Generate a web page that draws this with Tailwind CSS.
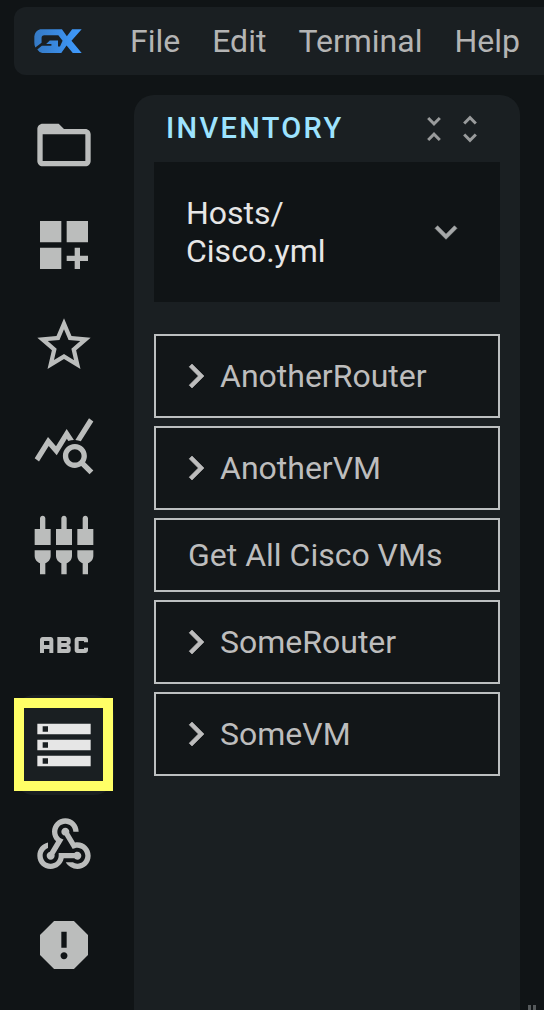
<!DOCTYPE html>
<html lang="en">
<head>
<meta charset="utf-8">
<meta name="viewport" content="width=device-width, initial-scale=1">
<title>Inventory</title>
<script src="https://cdn.jsdelivr.net/npm/@tailwindcss/browser@4"></script>
</head>
<body class="flex h-screen flex-col overflow-hidden bg-[#101416] font-[Roboto,sans-serif] text-[32px] leading-[38px] text-[#b4b4b4]">
  <header class="mt-[7px] ml-3.5 flex h-[68px] shrink-0 items-center rounded-l-xl bg-[#1a1f22] pl-5">
    <a href="#" aria-label="GX home" class="mr-8 block">
      <svg class="h-6 w-12" viewBox="0 0 144 73" aria-hidden="true">
        <defs><linearGradient id="brand" x1="0" x2="1"><stop offset="0" stop-color="#3579c4"/><stop offset="1" stop-color="#3f9bff"/></linearGradient></defs>
        <path fill="url(#brand)" d="M18 1H84L99 22L115 1H144L113 36L144 73H117L98 50L82 73H24Q14 70 9 62L23 51H52V46H36L47 35H72V53H78L86 36L73 19H30Q22 19 22 27V42L3 56Q0 50 0 42V22Q2 6 18 1Z"/>
      </svg>
    </a>
    <nav class="flex" aria-label="Main menu">
      <button type="button" class="px-4">File</button>
      <button type="button" class="px-4">Edit</button>
      <button type="button" class="px-4">Terminal</button>
      <button type="button" class="px-4">Help</button>
    </nav>
  </header>

  <div class="mt-5 flex min-h-0 flex-1">
    <nav class="ml-3.5 flex w-[100px] shrink-0 flex-col text-[#bbbdbc]" aria-label="Tools">
      <button type="button" aria-label="Files" class="flex h-[100px] shrink-0 items-center justify-center">
        <svg class="size-16" viewBox="0 0 24 24" fill="currentColor"><path d="M20 6h-8l-2-2H4c-1.1 0-1.99.9-1.99 2L2 18c0 1.1.9 2 2 2h16c1.1 0 2-.9 2-2V8c0-1.1-.9-2-2-2zm0 12H4V8h16v10z"/></svg>
      </button>
      <button type="button" aria-label="Add widget" class="flex h-[100px] shrink-0 items-center justify-center">
        <svg class="size-16" viewBox="0 0 24 24" fill="currentColor"><path d="M3 3h8v8H3zm10 0h8v8h-8zM3 13h8v8H3zm15 0h-2v3h-3v2h3v3h2v-3h3v-2h-3z"/></svg>
      </button>
      <button type="button" aria-label="Favorites" class="flex h-[100px] shrink-0 items-center justify-center">
        <svg class="size-16" viewBox="0 0 24 24" fill="currentColor"><path d="M22 9.24l-7.19-.62L12 2 9.19 8.63 2 9.24l5.46 4.73L5.82 21 12 17.27 18.18 21l-1.63-7.03L22 9.24zM12 15.4l-3.76 2.27 1-4.28-3.32-2.88 4.38-.38L12 6.1l1.71 4.04 4.38.38-3.32 2.88 1 4.28L12 15.4z"/></svg>
      </button>
      <button type="button" aria-label="Query stats" class="flex h-[100px] shrink-0 items-center justify-center">
        <svg class="size-16" viewBox="0 0 24 24" fill="currentColor"><path d="M19.88 18.47c.44-.7.7-1.51.7-2.39 0-2.49-2.01-4.5-4.5-4.5s-4.5 2.01-4.5 4.5 2.01 4.5 4.49 4.5c.88 0 1.7-.26 2.39-.7L21.58 23 23 21.58l-3.12-3.11zm-3.8.11c-1.38 0-2.5-1.12-2.5-2.5s1.12-2.5 2.5-2.5 2.5 1.12 2.5 2.5-1.12 2.5-2.5 2.5zM15.72 10.08c-.74.02-1.45.18-2.1.45l-.55-.83-3.8 6.18-3.01-3.52-3.63 5.81L1 17l5-8 3 3.5L13 6l2.72 4.08zm2.59.5c-.64-.28-1.33-.45-2.05-.49L21.38 2 23 3.18l-4.69 7.4z"/></svg>
      </button>
      <button type="button" aria-label="Components" class="flex h-[100px] shrink-0 items-center justify-center">
        <svg class="size-16" viewBox="0 0 24 24" fill="currentColor"><path d="M5 2c0-.55-.45-1-1-1s-1 .45-1 1v4H1v6h6V6H5V2zm4 14c0 1.3.84 2.4 2 2.82V23h2v-4.18c1.16-.41 2-1.51 2-2.82v-2H9v2zm-8 0c0 1.3.84 2.4 2 2.82V23h2v-4.18C6.16 18.4 7 17.3 7 16v-2H1v2zM21 6V2c0-.55-.45-1-1-1s-1 .45-1 1v4h-2v6h6V6h-2zm-8-4c0-.55-.45-1-1-1s-1 .45-1 1v4H9v6h6V6h-2V2zm4 14c0 1.3.84 2.4 2 2.82V23h2v-4.18c1.16-.41 2-1.51 2-2.82v-2h-6v2z"/></svg>
      </button>
      <button type="button" aria-label="Variables" class="flex h-[100px] shrink-0 items-center justify-center">
        <svg class="size-16" viewBox="0 0 24 24" fill="currentColor"><path d="M21 11h-1.5v-.5h-2v3h2V13H21v1c0 .55-.45 1-1 1h-3c-.55 0-1-.45-1-1v-4c0-.55.45-1 1-1h3c.55 0 1 .45 1 1v1zM8 10v5H6.5v-1.5h-2V15H3v-5c0-.55.45-1 1-1h3c.55 0 1 .45 1 1zm-1.5.5h-2V12h2v-1.5zm7 1.5c.55 0 1 .45 1 1v1c0 .55-.45 1-1 1h-4V9h4c.55 0 1 .45 1 1v1c0 .55-.45 1-1 1zM11 10.5v.75h2v-.75h-2zm2 2.25h-2v.75h2v-.75z"/></svg>
      </button>
      <button type="button" aria-label="Inventory" aria-current="page" class="relative flex h-[100px] shrink-0 items-center justify-center rounded-[20px] bg-[#1a1f22] text-[#e6e6e6]">
        <svg class="size-16" viewBox="0 0 24 24" fill="currentColor"><path d="M2 20h20v-4H2v4zm2-3h2v2H4v-2zM2 4v4h20V4H2zm4 3H4V5h2v2zm-4 7h20v-4H2v4zm2-3h2v2H4v-2z"/></svg>
        <span class="absolute top-[3px] right-px bottom-1 left-0 border-[10px] border-[#ffff66]"></span>
      </button>
      <button type="button" aria-label="Webhooks" class="flex h-[100px] shrink-0 items-center justify-center">
        <svg class="size-16" viewBox="0 0 24 24" fill="currentColor"><path d="M10 15h5.88c.27-.31.67-.5 1.12-.5.83 0 1.5.67 1.5 1.5s-.67 1.5-1.5 1.5c-.44 0-.84-.19-1.12-.5H11.9c-.46 2.28-2.48 4-4.9 4-2.76 0-5-2.24-5-5 0-2.42 1.72-4.44 4-4.9v2.07C4.84 13.58 4 14.7 4 16c0 1.65 1.35 3 3 3s3-1.35 3-3v-1zm2.5-11c1.65 0 3 1.35 3 3h2c0-2.76-2.24-5-5-5s-5 2.24-5 5c0 1.43.6 2.71 1.55 3.62l-2.35 3.9c-.68.14-1.2.75-1.2 1.48 0 .83.67 1.5 1.5 1.5s1.5-.67 1.5-1.5c0-.16-.02-.31-.07-.45l3.38-5.63C10.49 9.61 9.5 8.42 9.5 7c0-1.65 1.35-3 3-3zm4.5 9c-.64 0-1.23.2-1.72.54l-3.05-5.07C11.53 8.35 11 7.74 11 7c0-.83.67-1.5 1.5-1.5S14 6.17 14 7c0 .15-.02.29-.06.43l2.19 3.65c.28-.05.57-.08.87-.08 2.76 0 5 2.24 5 5s-2.24 5-5 5c-1.85 0-3.47-1.01-4.33-2.5h2.67c.48.32 1.05.5 1.66.5 1.65 0 3-1.35 3-3s-1.35-3-3-3z"/></svg>
      </button>
      <button type="button" aria-label="Problems" class="flex h-[100px] shrink-0 items-center justify-center">
        <svg class="size-16" viewBox="0 0 24 24" fill="currentColor"><path d="M15.73 3H8.27L3 8.27v7.46L8.27 21h7.46L21 15.73V8.27L15.73 3zM12 17.3c-.72 0-1.3-.58-1.3-1.3 0-.72.58-1.3 1.3-1.3.72 0 1.3.58 1.3 1.3 0 .72-.58 1.3-1.3 1.3zm1-4.3h-2V7h2v6z"/></svg>
      </button>
    </nav>

    <main class="ml-5 flex min-w-0 flex-1 flex-col rounded-t-[20px] bg-[#1a1f22] px-5">
      <div class="flex h-[67px] shrink-0 items-center justify-between pr-3 pl-3">
        <h1 class="pb-0.5 text-[29px] font-medium tracking-[0.08em] text-[#9de3ff]">INVENTORY</h1>
        <div class="flex text-[#999b9c]">
          <button type="button" aria-label="Collapse all"><svg class="size-9" viewBox="0 0 24 24" fill="currentColor"><path d="M7.41 18.59 8.83 20 12 16.83 15.17 20l1.41-1.41L12 14l-4.59 4.59zm9.18-13.18L15.17 4 12 7.17 8.83 4 7.41 5.41 12 10l4.59-4.59z"/></svg></button>
          <button type="button" aria-label="Expand all"><svg class="size-9" viewBox="0 0 24 24" fill="currentColor"><path d="M12 5.83 15.17 9l1.41-1.41L12 3 7.41 7.59 8.83 9 12 5.83zm0 12.34L8.83 15l-1.41 1.41L12 21l4.59-4.59L15.17 15 12 18.17z"/></svg></button>
        </div>
      </div>

      <div class="relative flex items-center justify-between bg-[#101416] px-8 py-8">
        <span aria-hidden="true" class="text-[#e6e6e6]">Hosts/<br>Cisco.yml</span>
        <svg class="size-11" viewBox="0 0 24 24" fill="#a6a8a9" stroke="#a6a8a9" stroke-width=".3" aria-hidden="true"><path d="M16.59 8.59 12 13.17 7.41 8.59 6 10l6 6 6-6z"/></svg>
        <select aria-label="Inventory file" class="absolute inset-0 size-full cursor-pointer opacity-0">
          <option>Hosts/Cisco.yml</option>
        </select>
      </div>

      <ul class="mt-8 flex flex-col gap-2 text-[#bdbdbd]">
        <li><button type="button" aria-expanded="false" class="flex h-[84px] w-full items-center border-2 border-[#bcbfc0] bg-[#121618] px-4">
          <svg class="size-12" viewBox="0 0 24 24" fill="currentColor" stroke="currentColor" stroke-width=".3"><path d="M10 6 8.59 7.41 13.17 12l-4.58 4.59L10 18l6-6z"/></svg>AnotherRouter</button></li>
        <li><button type="button" aria-expanded="false" class="flex h-[84px] w-full items-center border-2 border-[#bcbfc0] bg-[#121618] px-4">
          <svg class="size-12" viewBox="0 0 24 24" fill="currentColor" stroke="currentColor" stroke-width=".3"><path d="M10 6 8.59 7.41 13.17 12l-4.58 4.59L10 18l6-6z"/></svg>AnotherVM</button></li>
        <li><button type="button" class="flex h-[74px] w-full items-center border-2 border-[#bcbfc0] bg-[#121618] px-8">Get All Cisco VMs</button></li>
        <li><button type="button" aria-expanded="false" class="flex h-[84px] w-full items-center border-2 border-[#bcbfc0] bg-[#121618] px-4">
          <svg class="size-12" viewBox="0 0 24 24" fill="currentColor" stroke="currentColor" stroke-width=".3"><path d="M10 6 8.59 7.41 13.17 12l-4.58 4.59L10 18l6-6z"/></svg>SomeRouter</button></li>
        <li><button type="button" aria-expanded="false" class="flex h-[84px] w-full items-center border-2 border-[#bcbfc0] bg-[#121618] px-4">
          <svg class="size-12" viewBox="0 0 24 24" fill="currentColor" stroke="currentColor" stroke-width=".3"><path d="M10 6 8.59 7.41 13.17 12l-4.58 4.59L10 18l6-6z"/></svg>SomeVM</button></li>
      </ul>
    </main>

    <div role="separator" aria-orientation="vertical" class="flex w-6 shrink-0 items-end justify-center gap-0.5">
      <span class="h-[5px] w-[3px] bg-[#55595b]"></span>
      <span class="h-[5px] w-[3px] bg-[#55595b]"></span>
    </div>
  </div>
</body>
</html>
